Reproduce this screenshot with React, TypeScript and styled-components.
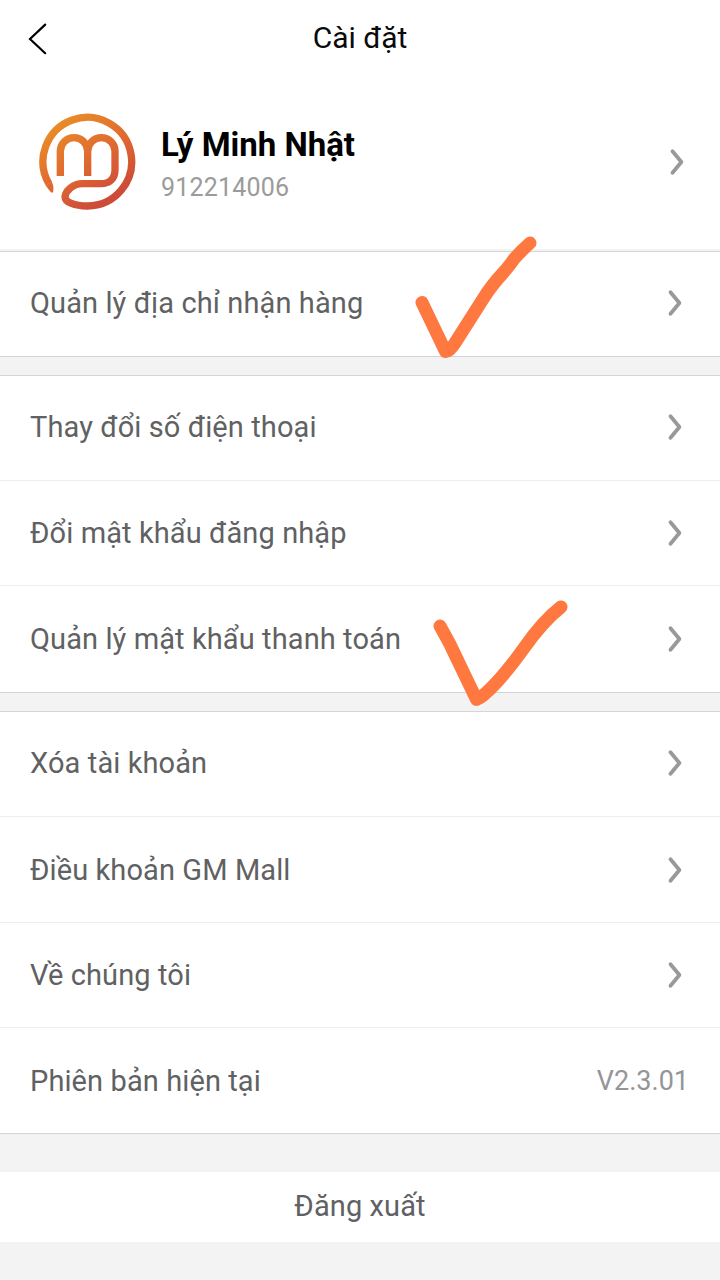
import React from "react";
import styled, { createGlobalStyle } from "styled-components";

const GlobalStyle = createGlobalStyle`
  *, *::before, *::after { box-sizing: border-box; }
  body { margin: 0; background: #f3f3f3; }
`;

const Screen = styled.main`
  position: relative;
  width: 720px;
  height: 1280px;
  overflow: hidden;
  background: #f3f3f3;
  font-family: Roboto, "Liberation Sans", sans-serif;
  color: #606163;
`;

const Header = styled.header`
  display: grid;
  grid-template-columns: 80px 1fr 80px;
  align-items: center;
  height: 78px;
  background: #fff;
`;

const BackButton = styled.button`
  display: flex;
  padding: 0 0 0 27px;
  border: 0;
  background: none;
`;

const Title = styled.h1`
  margin: 0;
  padding-bottom: 2px;
  text-align: center;
  font-size: 30px;
  font-weight: 400;
  line-height: 40px;
  color: #0a0a0a;
`;

const Profile = styled.section`
  display: flex;
  align-items: center;
  height: 171px;
  margin-bottom: 2px;
  padding: 0 35px 4px 38px;
  background: #fff;
`;

const ProfileText = styled.div`
  flex: 1;
  padding: 8px 0 0 24px;
`;

const Name = styled.div`
  font-size: 33px;
  font-weight: 700;
  line-height: 44px;
  color: #000;
`;

const AccountId = styled.div`
  font-size: 25px;
  line-height: 42px;
  letter-spacing: 0.2px;
  color: #9b9b9b;
`;

const Group = styled.section`
  display: flex;
  flex-direction: column;
  margin-bottom: 18px;
  border-top: 1px solid #d6d6d6;
  border-bottom: 1px solid #d3d3d3;
  background: #fff;
`;

const Row = styled.div<{ $height: number }>`
  display: flex;
  align-items: center;
  justify-content: space-between;
  height: ${(p) => p.$height}px;
  padding: 0 37px 2px 30px;
  & + & {
    padding-bottom: 0;
    border-top: 1px solid #eeeeee;
  }
`;

const Label = styled.span`
  font-size: 29px;
  line-height: 40px;
  letter-spacing: 0.1px;
`;

const Version = styled.span`
  margin-right: -6px;
  font-size: 27px;
  line-height: 40px;
  color: #949598;
`;

const Logout = styled.button`
  display: flex;
  align-items: center;
  justify-content: center;
  width: 100%;
  height: 70px;
  margin-top: 38px;
  padding: 0 0 2px;
  border: 0;
  background: #fff;
  color: inherit;
  font-family: inherit;
`;

const Annotations = styled.svg`
  position: absolute;
  inset: 0;
  pointer-events: none;
`;

const Chevron = () => (
  <svg width="16" height="28" viewBox="0 0 16 28" fill="none">
    <path d="M3.5 3.2 L12.4 14 L3.5 24.8" stroke="#999" strokeWidth="3.8" strokeLinecap="round" strokeLinejoin="round" />
  </svg>
);

const Avatar = () => (
  <svg width="99" height="99" viewBox="54 36 297 297" fill="none">
    <defs>
      <linearGradient id="brand" gradientUnits="userSpaceOnUse" x1="110" y1="70" x2="260" y2="300">
        <stop offset="0" stopColor="#e98c27" />
        <stop offset="0.5" stopColor="#e06b30" />
        <stop offset="1" stopColor="#cd4b39" />
      </linearGradient>
    </defs>
    <g stroke="url(#brand)" strokeWidth="22">
      <path d="M86.5 251 A133 133 0 1 1 202 318 C164 318 135 307 135 290 C137 271 160 251 187 251 H242 C270 251 285 235 285 209 V154 A41 41 0 0 0 203 154 V228" />
      <path d="M203 154 A41 41 0 0 0 121 154 V228" />
    </g>
    <path d="M77 256 L95 245 Q101 254 100 272 Q99 281 93 277 Q84 268 77 256Z" fill="url(#brand)" />
  </svg>
);

type Item = { label: string; height: number; value?: string };

const groups: Item[][] = [
  [{ label: "Quản lý địa chỉ nhận hàng", height: 104 }],
  [
    { label: "Thay đổi số điện thoại", height: 104 },
    { label: "Đổi mật khẩu đăng nhập", height: 105 },
    { label: "Quản lý mật khẩu thanh toán", height: 107 },
  ],
  [
    { label: "Xóa tài khoản", height: 104 },
    { label: "Điều khoản GM Mall", height: 106 },
    { label: "Về chúng tôi", height: 105 },
    { label: "Phiên bản hiện tại", height: 106, value: "V2.3.01" },
  ],
];

export default function App() {
  return (
    <Screen>
      <GlobalStyle />
      <Header>
        <BackButton aria-label="Quay lại">
          <svg width="22" height="32" viewBox="0 0 22 32" fill="none">
            <path d="M18.2 1.6 L3 16 L18.2 30.2" stroke="#000" strokeWidth="2.2" strokeLinecap="round" />
          </svg>
        </BackButton>
        <Title>Cài đặt</Title>
      </Header>
      <Profile>
        <Avatar />
        <ProfileText>
          <Name>Lý Minh Nhật</Name>
          <AccountId>912214006</AccountId>
        </ProfileText>
        <Chevron />
      </Profile>
      {groups.map((items) => (
        <Group key={items[0].label}>
          {items.map(({ label, height, value }) => (
            <Row key={label} $height={height}>
              <Label>{label}</Label>
              {value ? <Version>{value}</Version> : <Chevron />}
            </Row>
          ))}
        </Group>
      ))}
      <Logout>
        <Label>Đăng xuất</Label>
      </Logout>
      <Annotations width="720" height="1280" viewBox="0 0 720 1280" fill="none">
        <g stroke="#ff7840" strokeWidth="13" strokeLinecap="round" strokeLinejoin="round">
          <path d="M422 302.5 L445.500 351.500 Q450 351 455 343 L483 299 Q491 286 503 273 Q510 265 514 259 Q521 251 530 243" />
          <path d="M440 626 Q450 643 458 661 L476.500 699.500 Q483 697 496 683 Q509 669 524 648 Q543 621 561 607" />
        </g>
      </Annotations>
    </Screen>
  );
}
